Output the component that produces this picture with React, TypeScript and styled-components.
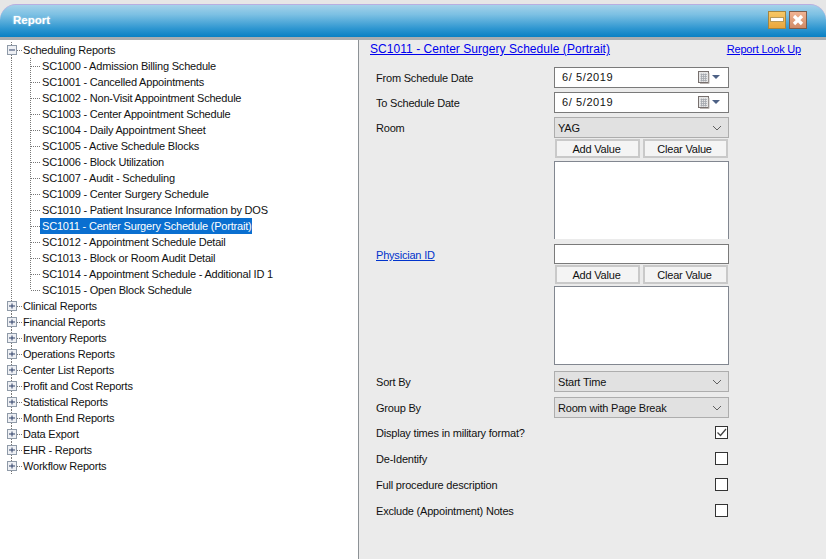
import React from "react";
import styled, { createGlobalStyle } from "styled-components";

const Global = createGlobalStyle`
  html, body { margin: 0; padding: 0; width: 826px; height: 559px; overflow: hidden; background: #e8e8e8; }
  body, button, input, select { font-family: "Liberation Sans", Arial, sans-serif; }
`;

const Window = styled.div`
  width: 826px;
  height: 559px;
  display: flex;
  flex-direction: column;
  padding-top: 4px;
  box-sizing: border-box;
  background: #e6e6e6;
  font-size: 11px;
  letter-spacing: -0.2px;
  color: #111;
`;

const TitleBar = styled.header`
  height: 33px;
  flex: none;
  box-sizing: border-box;
  display: flex;
  align-items: center;
  justify-content: space-between;
  padding: 0 19px 2px 13px;
  border-top: 1px solid #b7aee0;
  border-radius: 16px 16px 0 0;
  background: linear-gradient(#a4d2ea 0%, #7cc0e3 30%, #2c95d0 75%, #0980c4 100%);
`;

const Title = styled.h1`
  margin: 0;
  font-size: 11.5px;
  letter-spacing: 0;
  font-weight: 700;
  color: #fff;
  text-shadow: 0 0 2px rgba(255, 255, 255, 0.6);
`;

const WindowButtons = styled.div`
  display: flex;
  gap: 3px;
`;

const WindowButton = styled.div<{ $close?: boolean }>`
  width: 18px;
  height: 18px;
  box-sizing: border-box;
  display: flex;
  align-items: center;
  justify-content: center;
  border: 1px solid ${(p) => (p.$close ? "#7d5c4a" : "#a5853f")};
  background: ${(p) => (p.$close ? "linear-gradient(#f0b392,#d08a66)" : "linear-gradient(#f7c866,#e9a63c)")};
`;

const Body = styled.div`
  flex: 1;
  display: flex;
  min-height: 0;
  border-top: 3px solid #a9adb0;
`;

const TreePanel = styled.nav`
  width: 359px;
  flex: none;
  box-sizing: border-box;
  padding-top: 2px;
  background: #fff;
  border-right: 1px solid #8d9296;
`;

const TreeRow = styled.div`
  display: flex;
  align-items: center;
  height: 16px;
`;

const TreeLabel = styled.span<{ $selected?: boolean }>`
  line-height: 16px;
  height: 16px;
  padding: 0 1px 0 2px;
  margin-left: -2px;
  white-space: nowrap;
  background: ${(p) => (p.$selected ? "#0a6fd0" : "transparent")};
  color: ${(p) => (p.$selected ? "#fff" : "#111")};
`;

const Glyph = styled.svg`
  flex: none;
  display: block;
`;

const FormPanel = styled.main`
  flex: 1;
  min-width: 0;
  background: #ebebeb;
  padding: 2px 25px 0 11px;
  box-sizing: border-box;
`;

const HeaderRow = styled.div`
  display: flex;
  justify-content: space-between;
  align-items: center;
  height: 14px;
  margin-bottom: 11px;
`;

const ReportLink = styled.a`
  font-size: 12px;
  letter-spacing: 0.05px;
  color: #0000ee;
  text-decoration: underline;
`;

const LookupLink = styled.a`
  color: #0000ee;
  text-decoration: underline;
`;

const Form = styled.div`
  display: flex;
  flex-direction: column;
  padding-left: 6px;
`;

const Row = styled.div<{ $height: number }>`
  display: grid;
  grid-template-columns: 178px 175px;
  align-items: start;
  height: ${(p) => p.$height}px;
`;

const Label = styled.span<{ $h?: number }>`
  height: ${(p) => p.$h ?? 21}px;
  display: flex;
  align-items: center;
`;

const LabelLink = styled.a`
  color: #0033cc;
  text-decoration: underline;
`;

const Field = styled.div`
  display: flex;
  flex-direction: column;
`;

const DateBox = styled.div`
  height: 21px;
  box-sizing: border-box;
  display: flex;
  align-items: center;
  justify-content: space-between;
  padding: 0 1px 2px 7px;
  font-size: 11px;
  letter-spacing: 0.6px;
  background: #fff;
  border: 1px solid #7a7a7a;
`;

const Select = styled.div`
  height: 21px;
  box-sizing: border-box;
  display: flex;
  align-items: center;
  justify-content: space-between;
  padding: 0 6px 0 3px;
  background: #e1e1e1;
  border: 1px solid #adadad;
`;

const Buttons = styled.div`
  display: flex;
  justify-content: space-between;
  padding: 1px 1px 0;
`;

const ValueButton = styled.button`
  width: 85px;
  height: 19px;
  box-sizing: border-box;
  padding: 0 2px 0 0;
  font-size: 11px;
  letter-spacing: -0.2px;
  color: #111;
  background: #f4f4f4;
  border: 2px solid #c9c9c9;
  border-radius: 0;
`;

const ListBox = styled.div<{ $height: number; $gap: number; $open?: boolean }>`
  height: ${(p) => p.$height}px;
  box-sizing: border-box;
  margin-top: ${(p) => p.$gap}px;
  background: #fff;
  border: 1px solid #828790;
  ${(p) => (p.$open ? "border-bottom: none;" : "")}
`;

const TextBox = styled.div`
  height: 20px;
  box-sizing: border-box;
  background: #fff;
  border: 1px solid #7a7a7a;
`;

const CheckRow = styled.div`
  height: 26px;
  display: flex;
  align-items: flex-start;
  justify-content: space-between;
  width: 353px;
`;

const CheckLabel = styled.span`
  line-height: 15px;
`;

const CheckBox = styled.div`
  width: 13px;
  height: 13px;
  box-sizing: border-box;
  display: flex;
  align-items: center;
  justify-content: center;
  background: #fff;
  border: 1px solid #333;
  margin-right: 1px;
`;

const Expander = ({ open }: { open: boolean }) => (
  <Glyph width="23" height="16" viewBox="0 0 23 16">
    <path d="M11.5 13V16M11.5 0V3M17 8.5H22" stroke="#777" strokeDasharray="1 1" fill="none" />
    <rect x="7.5" y="3.5" width="9" height="9" fill="#eef0f4" stroke="#8f9aa8" />
    <path d="M9 8H15" stroke="#2c3f66" />
    {!open && <path d="M12 5.5V10.5" stroke="#2c3f66" />}
  </Glyph>
);

const ChildLines = ({ last }: { last: boolean }) => (
  <Glyph width="42" height="16" viewBox="0 0 42 16">
    <path d="M11.5 0V16" stroke="#777" strokeDasharray="1 1" fill="none" />
    <path d={last ? "M30.5 0V8" : "M30.5 0V16"} stroke="#777" strokeDasharray="1 1" fill="none" />
    <path d="M31 8.5H40" stroke="#777" strokeDasharray="1 1" fill="none" />
  </Glyph>
);

const CalendarCaret = () => (
  <Glyph width="29" height="14" viewBox="0 0 29 14">
    <rect x="0.5" y="1.5" width="10" height="11" fill="#e6e6e6" stroke="#77706e" />
    <path d="M11 3V13.5H2" stroke="#bdb8b5" fill="none" />
    <path d="M2.5 4.5H9M2.5 6.5H9M2.5 8.5H9M2.5 10.5H9M3.5 3.5V11.5M5.5 3.5V11.5M7.5 3.5V11.5" stroke="#a3a7ad" strokeWidth="0.8" />
    <path d="M14 5H22L18 9Z" fill="#4d6185" />
  </Glyph>
);

const Chevron = () => (
  <Glyph width="10" height="6" viewBox="0 0 10 6">
    <path d="M1 1L5 5L9 1" fill="none" stroke="#606060" />
  </Glyph>
);

const children = [
  "SC1000 - Admission Billing Schedule",
  "SC1001 - Cancelled Appointments",
  "SC1002 - Non-Visit Appointment Schedule",
  "SC1003 - Center Appointment Schedule",
  "SC1004 - Daily Appointment Sheet",
  "SC1005 - Active Schedule Blocks",
  "SC1006 - Block Utilization",
  "SC1007 - Audit - Scheduling",
  "SC1009 - Center Surgery Schedule",
  "SC1010 - Patient Insurance Information by DOS",
  "SC1011 - Center Surgery Schedule (Portrait)",
  "SC1012 - Appointment Schedule Detail",
  "SC1013 - Block or Room Audit Detail",
  "SC1014 - Appointment Schedule - Additional ID 1",
  "SC1015 - Open Block Schedule",
];

const groups = [
  "Clinical Reports",
  "Financial Reports",
  "Inventory Reports",
  "Operations Reports",
  "Center List Reports",
  "Profit and Cost Reports",
  "Statistical Reports",
  "Month End Reports",
  "Data Export",
  "EHR - Reports",
  "Workflow Reports",
];

export default function App() {
  return (
    <Window>
      <Global />
      <TitleBar>
        <Title>Report</Title>
        <WindowButtons>
          <WindowButton>
            <svg width="14" height="6" viewBox="0 0 14 6"><rect x="0.5" y="0.5" width="13" height="4" fill="#fff" stroke="#b89a5a" /></svg>
          </WindowButton>
          <WindowButton $close>
            <svg width="14" height="14" viewBox="0 0 14 14"><path d="M3 3L11 11M11 3L3 11" stroke="#fff" strokeWidth="3.2" /></svg>
          </WindowButton>
        </WindowButtons>
      </TitleBar>
      <Body>
        <TreePanel>
          <TreeRow><Expander open /><TreeLabel>Scheduling Reports</TreeLabel></TreeRow>
          {children.map((c, i) => (
            <TreeRow key={c}>
              <ChildLines last={i === children.length - 1} />
              <TreeLabel $selected={c.startsWith("SC1011")}>{c}</TreeLabel>
            </TreeRow>
          ))}
          {groups.map((g) => (
            <TreeRow key={g}><Expander open={false} /><TreeLabel>{g}</TreeLabel></TreeRow>
          ))}
        </TreePanel>
        <FormPanel>
          <HeaderRow>
            <ReportLink href="#">SC1011 - Center Surgery Schedule (Portrait)</ReportLink>
            <LookupLink href="#">Report Look Up</LookupLink>
          </HeaderRow>
          <Form>
            <Row $height={25}>
              <Label>From Schedule Date</Label>
              <DateBox>6/ 5/2019<CalendarCaret /></DateBox>
            </Row>
            <Row $height={25}>
              <Label>To Schedule Date</Label>
              <DateBox>6/ 5/2019<CalendarCaret /></DateBox>
            </Row>
            <Row $height={127}>
              <Label>Room</Label>
              <Field>
                <Select>YAG<Chevron /></Select>
                <Buttons>
                  <ValueButton>Add Value</ValueButton>
                  <ValueButton>Clear Value</ValueButton>
                </Buttons>
                <ListBox $height={78} $gap={3} $open />
              </Field>
            </Row>
            <Row $height={127}>
              <Label $h={22}><LabelLink href="#">Physician ID</LabelLink></Label>
              <Field>
                <TextBox />
                <Buttons>
                  <ValueButton>Add Value</ValueButton>
                  <ValueButton>Clear Value</ValueButton>
                </Buttons>
                <ListBox $height={79} $gap={2} />
              </Field>
            </Row>
            <Row $height={26}>
              <Label>Sort By</Label>
              <Select>Start Time<Chevron /></Select>
            </Row>
            <Row $height={29}>
              <Label>Group By</Label>
              <Select>Room with Page Break<Chevron /></Select>
            </Row>
            <CheckRow>
              <CheckLabel>Display times in military format?</CheckLabel>
              <CheckBox>
                <svg width="11" height="11" viewBox="0 0 11 11"><path d="M1.5 5.5L4.5 8.5L10 2" fill="none" stroke="#444" strokeWidth="1.3" /></svg>
              </CheckBox>
            </CheckRow>
            <CheckRow><CheckLabel>De-Identify</CheckLabel><CheckBox /></CheckRow>
            <CheckRow><CheckLabel>Full procedure description</CheckLabel><CheckBox /></CheckRow>
            <CheckRow><CheckLabel>Exclude (Appointment) Notes</CheckLabel><CheckBox /></CheckRow>
          </Form>
        </FormPanel>
      </Body>
    </Window>
  );
}
